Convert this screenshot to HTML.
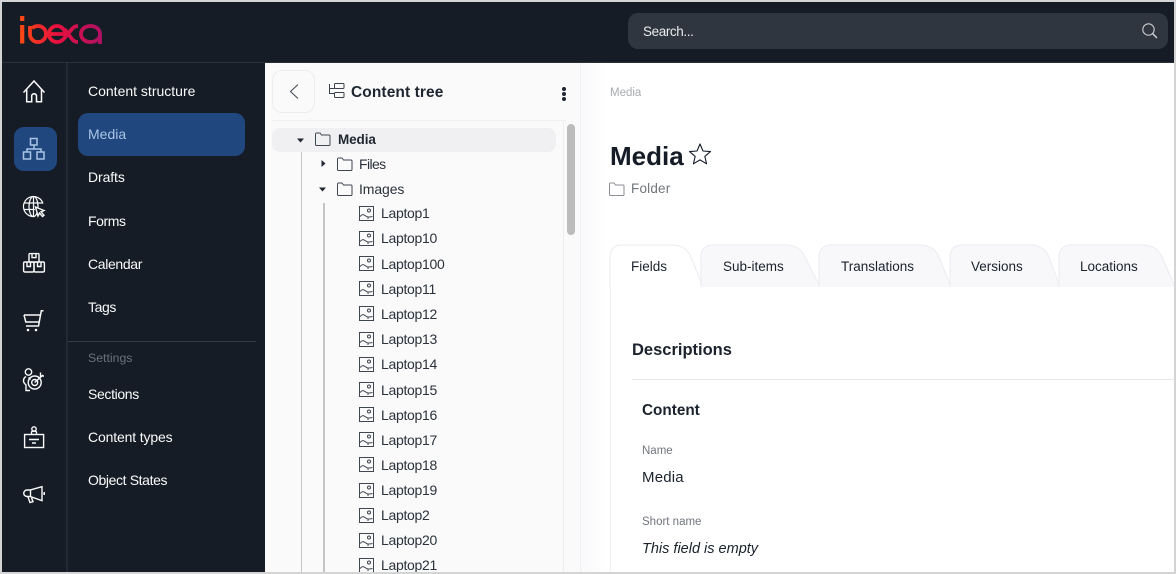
<!DOCTYPE html>
<html><head><meta charset="utf-8"><style>
*{box-sizing:border-box}
html,body{margin:0;padding:0;width:1176px;height:574px;overflow:hidden;background:#d4d4d4}
body{font-family:"Liberation Sans",sans-serif;position:relative}
.a{position:absolute;white-space:nowrap}
.nav{position:absolute;left:88px;color:#fafafa;font-size:14px;line-height:20px;white-space:nowrap}
.t{position:absolute;font-size:14px;line-height:20px;color:#2b323b;letter-spacing:-.3px;white-space:nowrap}
.tb{position:absolute;top:259px;font-size:13.500px;line-height:16px;color:#1b222c;white-space:nowrap}
svg{position:absolute;overflow:visible;fill:none}
</style></head><body>
<div style="position:absolute;left:0;top:0;width:1176px;height:574px;background:#d4d4d4"></div>
<!-- dark chrome -->
<div class="a" style="left:2px;top:2px;width:1172px;height:60px;background:#151c26"></div>
<div class="a" style="left:2px;top:62px;width:263px;height:510px;background:#151c26"></div>
<div class="a" style="left:2px;top:62px;width:1172px;height:1px;background:#2a313b"></div>
<div class="a" style="left:66px;top:63px;width:2px;height:509px;background:#232a35"></div>
<!-- logo -->
<svg style="left:0;top:0" width="120" height="60" stroke-width="3.800" stroke-linecap="butt">
<defs><linearGradient id="g" gradientUnits="userSpaceOnUse" x1="20" y1="0" x2="102" y2="0"><stop offset="0" stop-color="#fb4a12"/><stop offset=".45" stop-color="#e9103f"/><stop offset="1" stop-color="#ae1164"/></linearGradient></defs>
<g stroke="url(#g)">
<path d="M22.200 16v5M22.200 25v18.500" stroke-width="4.200"/>
<path d="M30 26v8c0 4.500 3.400 8 8 8s8-3.500 8-8-3.400-8-8-8c-2.500 0-4.500 .8-6 2.500"/>
<path d="M50 34h15c0-4.500-3.500-8-8-8s-8 3.600-8 8 3.500 8 8 8c3 0 5-1.200 7-3.500L72 29c1.500-1.800 3-3 6-3"/>
<path d="M64.500 29 72 39c1.500 2 3.200 3 6 3"/>
<path d="M100 44V34c0-4.500-3.800-8-9.500-8S81 29.500 81 34s3.800 8 9.500 8S100 38.500 100 34"/>
</g></svg>
<!-- search -->
<div class="a" style="left:628px;top:13px;width:540px;height:36px;background:#2f3640;border-radius:10px"></div>
<div class="a" style="left:643px;top:22px;font-size:13.500px;line-height:20px;color:#e8e9eb;letter-spacing:-.4px">Search...</div>
<svg style="left:1142px;top:23px" width="16" height="16" stroke="#c9ccd0" stroke-width="1.100"><circle cx="6.500" cy="6.500" r="5.700"/><path d="M10.700 10.700 15 15" stroke-width="1.500"/></svg>

<!-- left icon rail -->
<div class="a" style="left:14px;top:127px;width:43px;height:44px;background:#20487f;border-radius:10px"></div>
<svg style="left:23px;top:80px" width="22" height="24" stroke="#fafafa" stroke-width="1.500"><path d="M.5 12.500 11 1l10.500 11.500M3.700 9.500V21.700h5V15.500a2.500 2.500 0 0 1 4.800 0v6.200h5V9.500"/></svg>
<svg style="left:23px;top:138px" width="22" height="22" stroke="#a9c3e6" stroke-width="1.500"><rect x="7.500" y=".5" width="6.500" height="6.500"/><rect x=".5" y="14" width="7" height="7"/><rect x="14" y="14" width="7" height="7"/><path d="M11 7v4M4 14v-3h14v3"/></svg>
<svg style="left:23px;top:196px" width="22" height="22" stroke="#fafafa" stroke-width="1.200"><path d="M20 7.500A10 10 0 1 0 11.500 20.500"/><ellipse cx="10.500" cy="10.500" rx="4.500" ry="10"/><path d="M1 7h19M.8 13.500h11M10.500 .5V20.500"/><path d="M12.500 11l8.500 3.500-3 1.300 3 3.500-1.500 1.200-3-3.500-1.500 3z" fill="#151c26" stroke-width="1.400"/></svg>
<svg style="left:23px;top:253px" width="22" height="20" stroke="#fafafa" stroke-width="1.400"><rect x="6" y=".6" width="10" height="8.500" rx="1"/><path d="M9 .6v4h4v-4"/><rect x=".6" y="9" width="10.400" height="10" rx="1.200"/><rect x="11" y="9" width="10.400" height="10" rx="1.200"/><path d="M4 9v4.500h3.500V9M14.500 9v4.500h3.500V9"/></svg>
<svg style="left:23px;top:310px" width="22" height="22" stroke="#fafafa" stroke-width="1.500"><path d="M20.500 .8H18.300L15.500 16H3"/><path d="M1 5h16.300M1 5l1.800 7h13.800"/><circle cx="5" cy="20" r="1.300" fill="#fafafa" stroke="none"/><circle cx="13" cy="20" r="1.300" fill="#fafafa" stroke="none"/></svg>
<svg style="left:23px;top:368px" width="22" height="24" stroke="#fafafa" stroke-width="1.400"><circle cx="5.500" cy="4" r="3.200"/><path d="M3 8.500C1 9.500 .5 11 .5 13c0 2 1.500 3 2.500 4v5.500h4M5.500 9.500l2 2"/><circle cx="11.700" cy="14.500" r="6.500"/><circle cx="11.700" cy="14.500" r="3"/><path d="M11.700 14.500 20 7M17.500 4.500v3.500h3.500"/></svg>
<svg style="left:24px;top:426px" width="21" height="22" stroke="#fafafa" stroke-width="1.400"><rect x=".6" y="8.500" width="19" height="13"/><circle cx="10" cy="3" r="2.200"/><path d="M7.500 8.500V6.500c0-1 1-1.500 2.500-1.500s2.500.5 2.500 1.500v2M5 13.500h10M8 17h4"/></svg>
<svg style="left:23px;top:486px" width="22" height="18" stroke="#fafafa" stroke-width="1.400"><path d="M19 .7v14L7 10.500H4a3 3 0 0 1 0-6.500h3z"/><path d="M7.500 4v6.500M5 11l2 5.500 3-.8-1.500-4"/><path d="M21.200 6v3" stroke-width="1.600"/></svg>

<!-- nav -->
<div class="a" style="left:78px;top:113px;width:167px;height:43px;background:#20487f;border-radius:10px"></div>
<div class="nav" style="top:81px">Content structure</div>
<div class="nav" style="top:124px;color:#a9c3e6">Media</div>
<div class="nav" style="top:167px;letter-spacing:-.1px">Drafts</div>
<div class="nav" style="top:211px;letter-spacing:-.4px">Forms</div>
<div class="nav" style="top:254px;letter-spacing:-.35px">Calendar</div>
<div class="nav" style="top:297px;letter-spacing:-.4px">Tags</div>
<div class="a" style="left:68px;top:341px;width:188px;height:1px;background:#353c47"></div>
<div class="nav" style="top:348px;color:#6b717a;font-size:12.300px">Settings</div>
<div class="nav" style="top:384px;letter-spacing:-.35px">Sections</div>
<div class="nav" style="top:427px;letter-spacing:-.15px">Content types</div>
<div class="nav" style="top:470px;letter-spacing:-.38px">Object States</div>

<!-- tree panel -->
<div class="a" style="left:265px;top:63px;width:315px;height:509px;background:#fafafb"></div>
<div class="a" style="left:580px;top:63px;width:1px;height:509px;background:#eff0f3"></div>
<div class="a" style="left:272px;top:70px;width:43px;height:43px;border:1px solid #ecedf0;border-radius:10px;background:#fafafb"></div>
<svg style="left:289px;top:84px" width="10" height="15" stroke="#4a515b" stroke-width="1.100"><path d="M9 .5 1.500 7.500 9 14.500"/></svg>
<svg style="left:329px;top:83px" width="16" height="16" stroke="#3b424c" stroke-width="1"><path d="M.5 1v9.500h5M.5 5.500h5"/><rect x="5.500" y=".5" width="9.500" height="5" rx="1"/><rect x="5.500" y="9.500" width="9.500" height="5" rx="1"/></svg>
<div class="a" style="left:351px;top:82px;font-size:15.500px;line-height:21px;font-weight:700;color:#1f2630;letter-spacing:.1px">Content tree</div>
<div class="a" style="left:562px;top:87px;width:4px;height:4px;border-radius:50%;background:#1f2630"></div>
<div class="a" style="left:562px;top:92px;width:4px;height:4px;border-radius:50%;background:#1f2630"></div>
<div class="a" style="left:562px;top:97px;width:4px;height:4px;border-radius:50%;background:#1f2630"></div>
<div class="a" style="left:272px;top:120px;width:294px;height:1px;background:#eeeff2"></div>
<div class="a" style="left:563px;top:121px;width:1px;height:451px;background:#eceef1"></div>
<div class="a" style="left:567px;top:124px;width:8px;height:111px;border-radius:4px;background:#bcbcbd"></div>
<div class="a" style="left:272px;top:128px;width:284px;height:24px;border-radius:8px;background:#f0f0f3"></div>
<div class="a" style="left:301px;top:152px;width:1px;height:420px;background:#c4c4c6"></div>
<div class="a" style="left:323px;top:203px;width:1.500px;height:369px;background:#c4c4c6"></div>
<svg style="left:297px;top:138px" width="8" height="5"><path d="M0 .5h7L3.500 4.500z" fill="#20262f"/></svg>
<svg style="left:321px;top:160px" width="5" height="8"><path d="M.5 0v7l4-3.500z" fill="#20262f"/></svg>
<svg style="left:319px;top:187px" width="8" height="5"><path d="M0 .5h7L3.500 4.500z" fill="#20262f"/></svg>
<svg style="left:315px;top:132px" width="16" height="14" stroke="#3f4650" stroke-width="1"><path d="M1.500 1h3.500l1.500 2H14a1 1 0 0 1 1 1v8.500a1 1 0 0 1-1 1H1.500a1 1 0 0 1-1-1V2a1 1 0 0 1 1-1z"/></svg>
<svg style="left:337px;top:157px" width="16" height="14" stroke="#3f4650" stroke-width="1"><path d="M1.500 1h3.500l1.500 2H14a1 1 0 0 1 1 1v8.500a1 1 0 0 1-1 1H1.500a1 1 0 0 1-1-1V2a1 1 0 0 1 1-1z"/></svg>
<svg style="left:337px;top:182px" width="16" height="14" stroke="#3f4650" stroke-width="1"><path d="M1.500 1h3.500l1.500 2H14a1 1 0 0 1 1 1v8.500a1 1 0 0 1-1 1H1.500a1 1 0 0 1-1-1V2a1 1 0 0 1 1-1z"/></svg>
<div class="t" style="left:338px;top:130px;font-weight:700;color:#1f2630;font-size:13.500px;letter-spacing:-.1px">Media</div>
<div class="t" style="left:359px;top:154px;letter-spacing:-.6px">Files</div>
<div class="t" style="left:359px;top:179px;letter-spacing:-.1px">Images</div>
<svg style="left:359px;top:206px" width="15" height="15"><g stroke="#3f4650" stroke-width="1"><rect x=".5" y=".5" width="14" height="14"/><circle cx="10" cy="4.500" r="1.500"/><path d="M1 10.500c2-2 3-2.500 5-1s3 2 7.500 1M9 11v2"/></g></svg>
<svg style="left:359px;top:231px" width="15" height="15"><g stroke="#3f4650" stroke-width="1"><rect x=".5" y=".5" width="14" height="14"/><circle cx="10" cy="4.500" r="1.500"/><path d="M1 10.500c2-2 3-2.500 5-1s3 2 7.500 1M9 11v2"/></g></svg>
<svg style="left:359px;top:256px" width="15" height="15"><g stroke="#3f4650" stroke-width="1"><rect x=".5" y=".5" width="14" height="14"/><circle cx="10" cy="4.500" r="1.500"/><path d="M1 10.500c2-2 3-2.500 5-1s3 2 7.500 1M9 11v2"/></g></svg>
<svg style="left:359px;top:281px" width="15" height="15"><g stroke="#3f4650" stroke-width="1"><rect x=".5" y=".5" width="14" height="14"/><circle cx="10" cy="4.500" r="1.500"/><path d="M1 10.500c2-2 3-2.500 5-1s3 2 7.500 1M9 11v2"/></g></svg>
<svg style="left:359px;top:306px" width="15" height="15"><g stroke="#3f4650" stroke-width="1"><rect x=".5" y=".5" width="14" height="14"/><circle cx="10" cy="4.500" r="1.500"/><path d="M1 10.500c2-2 3-2.500 5-1s3 2 7.500 1M9 11v2"/></g></svg>
<svg style="left:359px;top:332px" width="15" height="15"><g stroke="#3f4650" stroke-width="1"><rect x=".5" y=".5" width="14" height="14"/><circle cx="10" cy="4.500" r="1.500"/><path d="M1 10.500c2-2 3-2.500 5-1s3 2 7.500 1M9 11v2"/></g></svg>
<svg style="left:359px;top:357px" width="15" height="15"><g stroke="#3f4650" stroke-width="1"><rect x=".5" y=".5" width="14" height="14"/><circle cx="10" cy="4.500" r="1.500"/><path d="M1 10.500c2-2 3-2.500 5-1s3 2 7.500 1M9 11v2"/></g></svg>
<svg style="left:359px;top:382px" width="15" height="15"><g stroke="#3f4650" stroke-width="1"><rect x=".5" y=".5" width="14" height="14"/><circle cx="10" cy="4.500" r="1.500"/><path d="M1 10.500c2-2 3-2.500 5-1s3 2 7.500 1M9 11v2"/></g></svg>
<svg style="left:359px;top:407px" width="15" height="15"><g stroke="#3f4650" stroke-width="1"><rect x=".5" y=".5" width="14" height="14"/><circle cx="10" cy="4.500" r="1.500"/><path d="M1 10.500c2-2 3-2.500 5-1s3 2 7.500 1M9 11v2"/></g></svg>
<svg style="left:359px;top:432px" width="15" height="15"><g stroke="#3f4650" stroke-width="1"><rect x=".5" y=".5" width="14" height="14"/><circle cx="10" cy="4.500" r="1.500"/><path d="M1 10.500c2-2 3-2.500 5-1s3 2 7.500 1M9 11v2"/></g></svg>
<svg style="left:359px;top:457px" width="15" height="15"><g stroke="#3f4650" stroke-width="1"><rect x=".5" y=".5" width="14" height="14"/><circle cx="10" cy="4.500" r="1.500"/><path d="M1 10.500c2-2 3-2.500 5-1s3 2 7.500 1M9 11v2"/></g></svg>
<svg style="left:359px;top:483px" width="15" height="15"><g stroke="#3f4650" stroke-width="1"><rect x=".5" y=".5" width="14" height="14"/><circle cx="10" cy="4.500" r="1.500"/><path d="M1 10.500c2-2 3-2.500 5-1s3 2 7.500 1M9 11v2"/></g></svg>
<svg style="left:359px;top:508px" width="15" height="15"><g stroke="#3f4650" stroke-width="1"><rect x=".5" y=".5" width="14" height="14"/><circle cx="10" cy="4.500" r="1.500"/><path d="M1 10.500c2-2 3-2.500 5-1s3 2 7.500 1M9 11v2"/></g></svg>
<svg style="left:359px;top:533px" width="15" height="15"><g stroke="#3f4650" stroke-width="1"><rect x=".5" y=".5" width="14" height="14"/><circle cx="10" cy="4.500" r="1.500"/><path d="M1 10.500c2-2 3-2.500 5-1s3 2 7.500 1M9 11v2"/></g></svg>
<svg style="left:359px;top:558px" width="15" height="15"><g stroke="#3f4650" stroke-width="1"><rect x=".5" y=".5" width="14" height="14"/><circle cx="10" cy="4.500" r="1.500"/><path d="M1 10.500c2-2 3-2.500 5-1s3 2 7.500 1M9 11v2"/></g></svg>
<div class="t" style="left:381px;top:203px">Laptop1</div>
<div class="t" style="left:381px;top:228px">Laptop10</div>
<div class="t" style="left:381px;top:254px">Laptop100</div>
<div class="t" style="left:381px;top:279px">Laptop11</div>
<div class="t" style="left:381px;top:304px">Laptop12</div>
<div class="t" style="left:381px;top:329px">Laptop13</div>
<div class="t" style="left:381px;top:354px">Laptop14</div>
<div class="t" style="left:381px;top:380px">Laptop15</div>
<div class="t" style="left:381px;top:405px">Laptop16</div>
<div class="t" style="left:381px;top:430px">Laptop17</div>
<div class="t" style="left:381px;top:455px">Laptop18</div>
<div class="t" style="left:381px;top:480px">Laptop19</div>
<div class="t" style="left:381px;top:505px">Laptop2</div>
<div class="t" style="left:381px;top:530px">Laptop20</div>
<div class="t" style="left:381px;top:555px">Laptop21</div>

<!-- main -->
<div class="a" style="left:581px;top:63px;width:593px;height:509px;background:#fff"></div>
<div class="a" style="left:581px;top:63px;width:28px;height:509px;background:linear-gradient(90deg,#f9f9fb,#fff)"></div>
<div class="a" style="left:610px;top:86px;font-size:11.500px;line-height:14px;color:#a8abb0">Media</div>
<div class="a" style="left:610px;top:140px;font-size:26px;line-height:32px;font-weight:700;color:#151c26">Media</div>
<svg style="left:689px;top:143px" width="22" height="22" stroke="#151c26" stroke-width="1.100" stroke-linejoin="round"><path d="M11 1l3 7 7.500.6-5.700 4.800 1.800 7.400L11 16.900l-6.600 3.900 1.800-7.400L.5 8.600 8 8z"/></svg>
<svg style="left:609px;top:182px" width="16" height="14" stroke="#8a8e94" stroke-width="1"><path d="M1.500 1h3.500l1.500 2H14a1 1 0 0 1 1 1v8.500a1 1 0 0 1-1 1H1.500a1 1 0 0 1-1-1V2a1 1 0 0 1 1-1z"/></svg>
<div class="a" style="left:631px;top:179px;font-size:13.500px;line-height:20px;color:#71767d;letter-spacing:.2px">Folder</div>

<!-- tabs -->
<svg style="left:600px;top:240px" width="576" height="50" stroke="#ebebf2" stroke-width="1">
<path d="M10 47V16a11 11 0 0 1 11-11H72c8 0 15 3 19 12l12 30" fill="#fff"/>
<path d="M101 47V16a11 11 0 0 1 11-11H186c8 0 15 3 19 12l15 30" fill="#f8f8fa"/>
<path d="M219 47V16a11 11 0 0 1 11-11H320c8 0 15 3 19 12l12 30" fill="#f8f8fa"/>
<path d="M350 47V16a11 11 0 0 1 11-11H430c8 0 15 3 19 12l11 30" fill="#f8f8fa"/>
<path d="M459 47V16a11 11 0 0 1 11-11H543c8 0 15 3 19 12l13 30" fill="#f8f8fa"/>
</svg>
<div class="tb" style="left:631px">Fields</div>
<div class="tb" style="left:723px">Sub-items</div>
<div class="tb" style="left:841px">Translations</div>
<div class="tb" style="left:971px">Versions</div>
<div class="tb" style="left:1080px">Locations</div>
<div class="a" style="left:610px;top:287px;width:1px;height:285px;background:#f0f0f4"></div>

<div class="a" style="left:632px;top:339px;font-size:16.500px;line-height:22px;font-weight:700;color:#1b222c">Descriptions</div>
<div class="a" style="left:632px;top:379px;width:542px;height:1px;background:#e6e7ec"></div>
<div class="a" style="left:642px;top:401px;font-size:15.300px;line-height:20px;font-weight:700;color:#1b222c">Content</div>
<div class="a" style="left:642px;top:444px;font-size:11.500px;line-height:14px;color:#71767d">Name</div>
<div class="a" style="left:642px;top:467px;font-size:15px;line-height:21px;color:#1b222c;letter-spacing:.2px">Media</div>
<div class="a" style="left:642px;top:515px;font-size:11.500px;line-height:14px;color:#71767d">Short name</div>
<div class="a" style="left:642px;top:539px;font-size:14.500px;line-height:21px;font-style:italic;color:#1b222c">This field is empty</div>
<!-- frame -->
<div class="a" style="left:0;top:0;width:1176px;height:574px;border:2px solid #d4d4d4;pointer-events:none"></div>
</body></html>
